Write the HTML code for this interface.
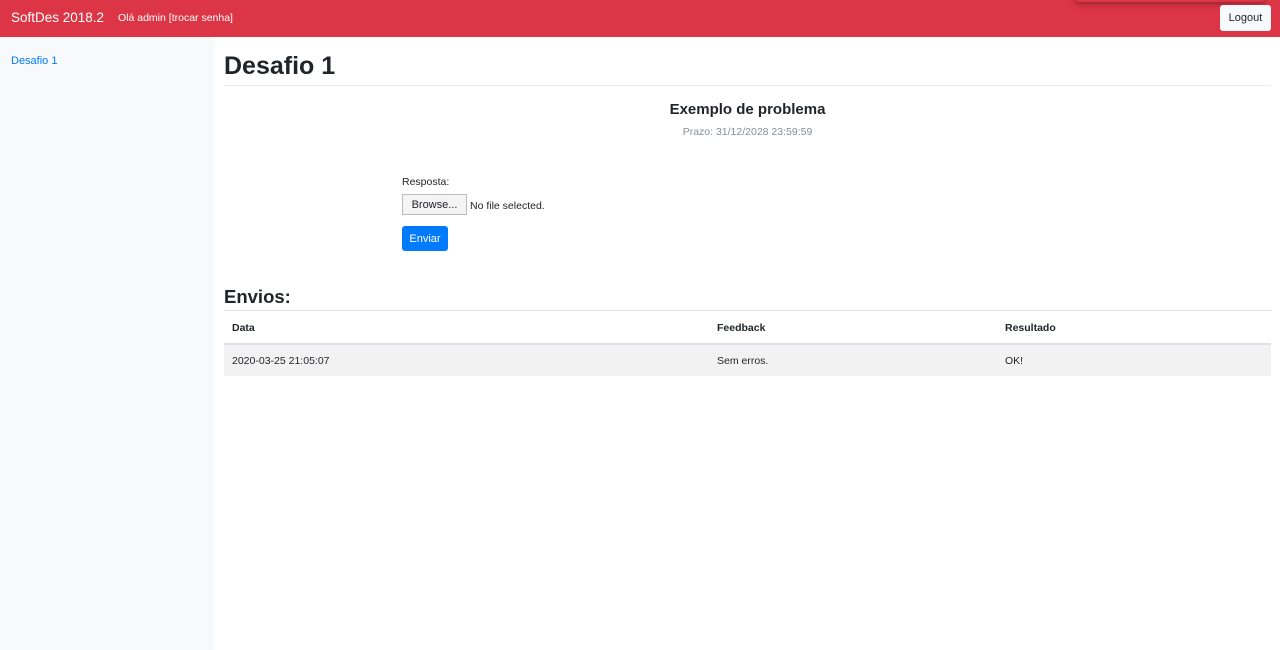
<!DOCTYPE html>
<html><head><meta charset="utf-8"><style>
*{box-sizing:border-box}
body{margin:0;font-family:"Liberation Sans",sans-serif;color:#212529;background:#fff;width:1280px;height:650px;overflow:hidden;position:relative}
.nav{position:absolute;left:0;top:0;width:1280px;height:37px;background:#dc3545;}
.brand{position:absolute;left:11px;top:10px;font-size:13.5px;color:#fff}
.hello{position:absolute;left:118px;top:12px;font-size:10.5px;color:#fff}
.logout{position:absolute;left:1220px;top:5px;width:51px;height:26px;background:#f8f9fa;border-radius:3px;font-size:11px;line-height:26px;text-align:center;color:#212529}
.shadow{position:absolute;left:1075px;top:-6px;width:190px;height:8px;box-shadow:0 2px 6px rgba(0,0,0,.35);border-radius:4px;background:#dc3545}
.side{position:absolute;left:0;top:37px;width:214px;height:613px;background:#f8f9fa}
.side a{position:absolute;left:11px;top:18px;font-size:11px;color:#007bff;text-decoration:none}
h1{position:absolute;left:224px;top:51px;margin:0;font-size:25px;font-weight:bold;line-height:30px}
.hr1{position:absolute;left:224px;top:85px;width:1047px;height:1px;background:#e9ecef}
.t1{position:absolute;left:224px;width:1047px;top:101px;text-align:center;font-size:15px;font-weight:bold;color:#212529}
.t2{position:absolute;left:224px;width:1047px;top:126px;text-align:center;font-size:10.5px;color:#868e96}
.lab{position:absolute;left:402px;top:176px;font-size:10.5px}
.browse{position:absolute;left:402px;top:194px;width:65px;height:21px;border:1px solid #bbb;background:#f4f4f4;font-size:11px;line-height:19px;text-align:center;padding-top:1px}
.nf{position:absolute;left:470px;top:200px;font-size:10.5px}
.env{position:absolute;left:402px;top:226px;width:46px;height:25px;background:#007bff;border-radius:3px;color:#fff;font-size:11px;line-height:26px;text-align:center}
h3{position:absolute;left:224px;top:286px;margin:0;font-size:18.5px;font-weight:bold;line-height:22px;color:#212529}
.hr2{position:absolute;left:224px;top:310px;width:1047px;height:1px;background:#dee2e6}
.th{position:absolute;top:322px;font-size:10.5px;font-weight:bold}
.hr3{position:absolute;left:224px;top:343px;width:1047px;height:2px;background:#dee2e6}
.row{position:absolute;left:224px;top:345px;width:1047px;height:31px;background:#f2f2f2}
.td{position:absolute;top:355px;font-size:10.5px}
</style></head><body>
<div class="nav"><div class="shadow"></div><div class="brand">SoftDes 2018.2</div><div class="hello">Olá admin [trocar senha]</div><div class="logout">Logout</div></div>
<div class="side"><a>Desafio 1</a></div>
<h1>Desafio 1</h1><div class="hr1"></div>
<div class="t1">Exemplo de problema</div>
<div class="t2">Prazo: 31/12/2028 23:59:59</div>
<div class="lab">Resposta:</div>
<div class="browse">Browse...</div><div class="nf">No file selected.</div>
<div class="env">Enviar</div>
<h3>Envios:</h3><div class="hr2"></div>
<div class="th" style="left:232px">Data</div>
<div class="th" style="left:717px">Feedback</div>
<div class="th" style="left:1005px">Resultado</div>
<div class="hr3"></div>
<div class="row"></div>
<div class="td" style="left:232px">2020-03-25 21:05:07</div>
<div class="td" style="left:717px">Sem erros.</div>
<div class="td" style="left:1005px">OK!</div>
</body></html>
